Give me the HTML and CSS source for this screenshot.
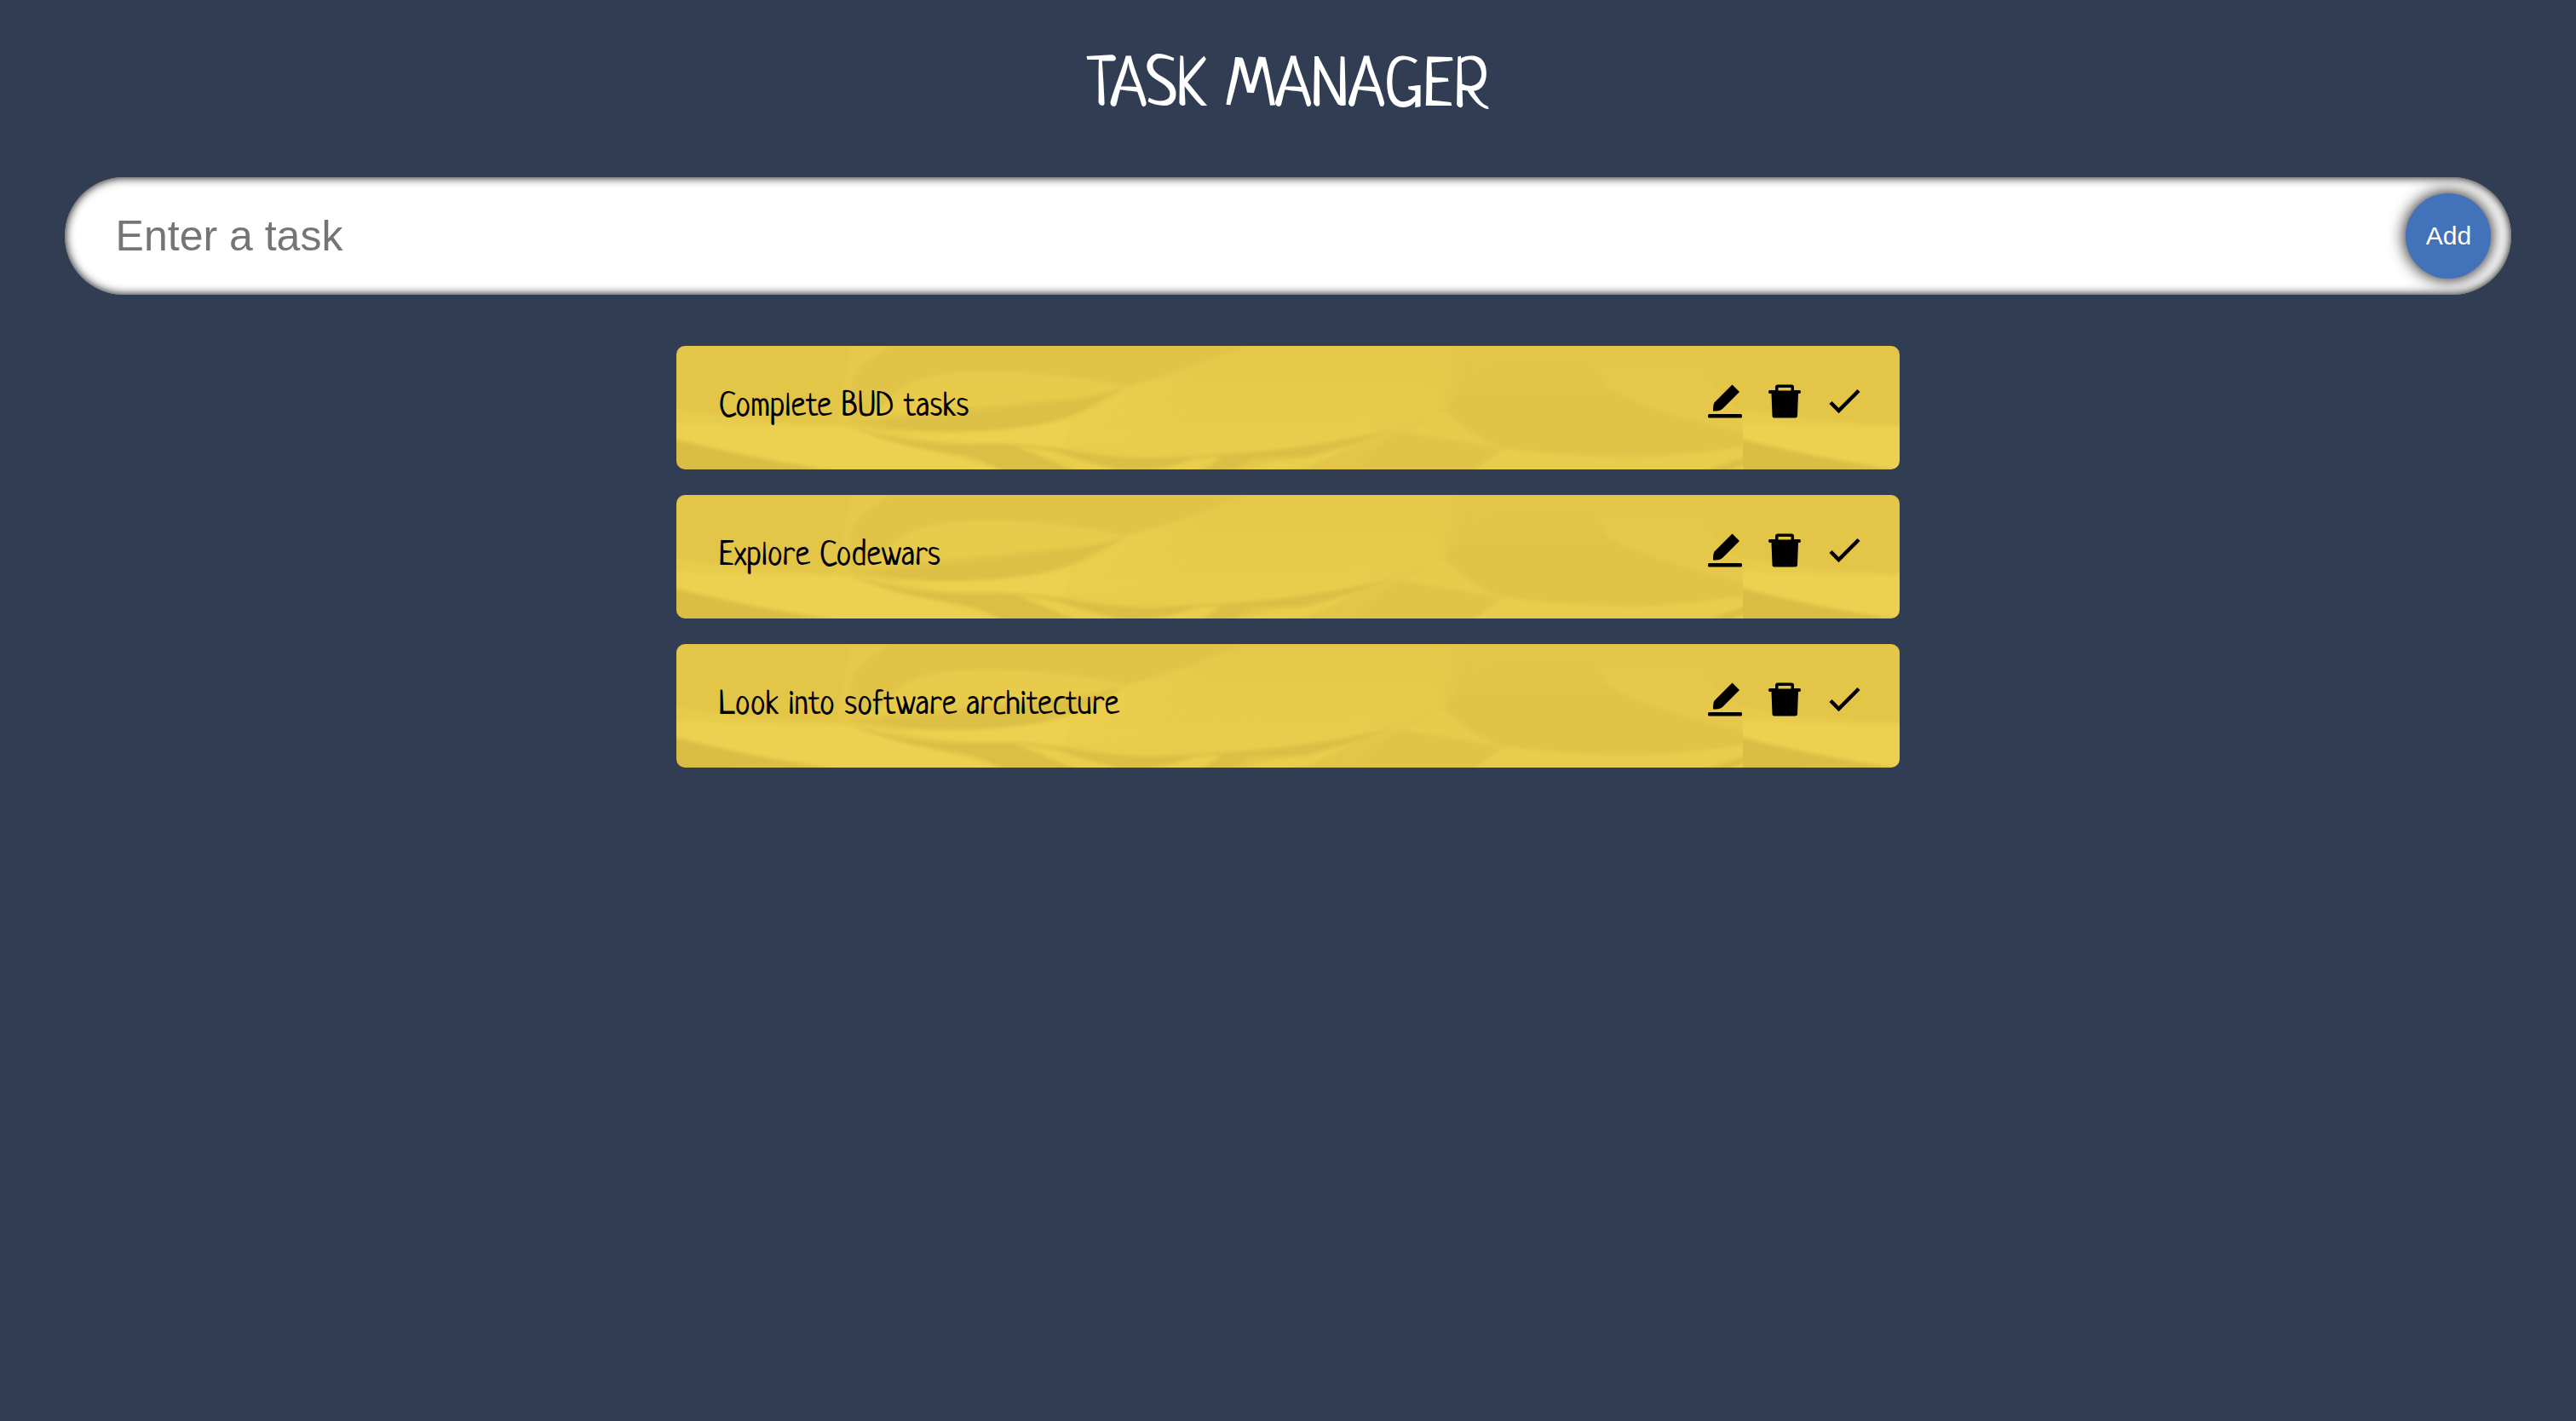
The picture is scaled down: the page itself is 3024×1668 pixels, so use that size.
FILE: index.html
```html
<!DOCTYPE html>
<html lang="en">
<head>
<meta charset="utf-8">
<meta name="viewport" content="width=device-width, initial-scale=1">
<title>Task Manager</title>
<link rel="stylesheet" href="styles.css">
</head>
<body>
<svg class="sprite" aria-hidden="true">
  <symbol id="icon-edit" viewBox="0 0 40 40">
    <path d="M28.500 0.500L37 9L17 29C14 31.500 10 31.500 6 31.500C6 28 6 24 7.500 21.500Z"/>
    <rect y="35" width="40" height="4.500" rx="1.500"/>
  </symbol>
  <symbol id="icon-trash" viewBox="0 0 40 40">
    <path fill-rule="evenodd" d="M12 0.500H28Q31 0.500 31 3.500V7H37.500Q39 7 39 9Q39 11 37.500 11H36L35 37Q35 39.500 32 39.500H8Q5.500 39.500 5.500 37L4.500 11H2.500Q1 11 1 9Q1 7 2.500 7H9V3.500Q9 0.500 12 0.500ZM12.500 4V7.500H27.500V4Z"/>
  </symbol>
  <symbol id="icon-check" viewBox="0 0 40 40">
    <path d="M4 21.500L13.500 31L37 7.500" fill="none" stroke="currentColor" stroke-width="4.500"/>
  </symbol>
</svg>
<main class="app">
  <h1 class="title">TASK MANAGER</h1>
  <form class="task-form">
    <input class="task-input" type="text" placeholder="Enter a task" aria-label="Enter a task">
    <button class="add-button" type="button">Add</button>
  </form>
  <ul class="task-list">
    <li class="task">
      <span class="task-text">Complete BUD tasks</span>
      <div class="actions">
        <button class="action" type="button" aria-label="Edit"><svg class="icon"><use href="#icon-edit"/></svg></button>
        <button class="action" type="button" aria-label="Delete"><svg class="icon"><use href="#icon-trash"/></svg></button>
        <button class="action" type="button" aria-label="Done"><svg class="icon"><use href="#icon-check"/></svg></button>
      </div>
    </li>
    <li class="task">
      <span class="task-text">Explore Codewars</span>
      <div class="actions">
        <button class="action" type="button" aria-label="Edit"><svg class="icon"><use href="#icon-edit"/></svg></button>
        <button class="action" type="button" aria-label="Delete"><svg class="icon"><use href="#icon-trash"/></svg></button>
        <button class="action" type="button" aria-label="Done"><svg class="icon"><use href="#icon-check"/></svg></button>
      </div>
    </li>
    <li class="task">
      <span class="task-text">Look into software architecture</span>
      <div class="actions">
        <button class="action" type="button" aria-label="Edit"><svg class="icon"><use href="#icon-edit"/></svg></button>
        <button class="action" type="button" aria-label="Delete"><svg class="icon"><use href="#icon-trash"/></svg></button>
        <button class="action" type="button" aria-label="Done"><svg class="icon"><use href="#icon-check"/></svg></button>
      </div>
    </li>
  </ul>
</main>
</body>
</html>
```

FILE: styles.css
```css
* {
  box-sizing: border-box;
}

body {
  margin: 0;
  min-height: 100vh;
  background: #313d52;
  font-family: "Neucha", "Liberation Sans Narrow", "Open Sans Condensed", "DejaVu Sans Condensed", sans-serif;
}

.sprite {
  display: none;
}

.app {
  padding: 54px 2.5%;
}

.title {
  margin: 0 0 54px;
  color: #fff;
  font-size: 80px;
  font-weight: 400;
  line-height: 100px;
  text-align: center;
}

.task-form {
  display: flex;
  align-items: center;
  padding: 19px 24px 19px 60px;
  border-radius: 70px;
  overflow: hidden;
  background: #fff;
  box-shadow: inset 0 0 12px #000;
}

.task-input {
  flex: 1;
  min-width: 0;
  padding: 0;
  border: 0;
  outline: 0;
  background: transparent;
  font: 50px "Liberation Sans", Arial, sans-serif;
}

.task-input::placeholder {
  color: #757575;
  opacity: 1;
}

.add-button {
  width: 100px;
  height: 100px;
  padding: 0;
  border: 0;
  border-radius: 50%;
  background: #4272b9;
  box-shadow: 0 0 20px #000;
  color: #fff;
  font: 30px "Liberation Sans", Arial, sans-serif;
}

.task-list {
  display: grid;
  gap: 30px;
  width: 50%;
  margin: 60px auto 0;
  padding: 0;
  list-style: none;
}

/* Folded yellow paper, repeated across the card */
.task {
  display: flex;
  align-items: center;
  justify-content: space-between;
  gap: 30px;
  min-height: 145px;
  padding: 28px 45px 30px 50px;
  border-radius: 10px;
  background: #e4c648 url("data:image/svg+xml,%3Csvg xmlns='http://www.w3.org/2000/svg' width='1252' height='145' viewBox='0 0 1252 145'%3E%3Cdefs%3E%3Cfilter id='s' x='-5%25' y='-10%25' width='110%25' height='120%25'%3E%3CfeGaussianBlur stdDeviation='2'/%3E%3C/filter%3E%3Cfilter id='w' x='-10%25' y='-30%25' width='120%25' height='160%25'%3E%3CfeGaussianBlur stdDeviation='9'/%3E%3C/filter%3E%3ClinearGradient id='g' x2='0' y2='1'%3E%3Cstop stop-color='%23e4c648'/%3E%3Cstop offset='1' stop-color='%23e9cd4c'/%3E%3C/linearGradient%3E%3ClinearGradient id='h' gradientUnits='userSpaceOnUse' x1='530' y1='50' x2='590' y2='90'%3E%3Cstop stop-color='%23e9cd4c'/%3E%3Cstop offset='1' stop-color='%23e9cd4c' stop-opacity='0'/%3E%3C/linearGradient%3E%3ClinearGradient id='d' gradientUnits='userSpaceOnUse' x1='980' y1='15' x2='980' y2='75'%3E%3Cstop stop-color='%23e0c347' stop-opacity='0'/%3E%3Cstop offset='1' stop-color='%23e0c347'/%3E%3C/linearGradient%3E%3ClinearGradient id='r' gradientUnits='userSpaceOnUse' x1='1110' y1='55' x2='1110' y2='5'%3E%3Cstop stop-color='%23e7ca4c'/%3E%3Cstop offset='1' stop-color='%23e7ca4c' stop-opacity='0'/%3E%3C/linearGradient%3E%3C/defs%3E%3Crect width='1252' height='145' fill='%23e3c548'/%3E%3Cpath fill='url(%23g)' d='M640-20H920L900 80L840 100L740 125L500 125L520 60Z' filter='url(%23w)'/%3E%3Cg filter='url(%23s)'%3E%3Cpath fill='%23e7ca4b' d='M205 0H265Q215 22 208 45V90H188Z' opacity='.6'/%3E%3Cpath fill='%23e0c347' d='M265-9Q208 25 205 48V92Q260 103 340 99Q446 92 530 48Q600 28 635 12L690-9Z'/%3E%3Cpath fill='%23e9cd4c' d='M-5 73Q90 91 205 92Q300 106 350 100Q430 95 470 80L500 100Q650 88 830 98Q770 118 670 124L560 134L446 126L410 150H-5Z' opacity='.8'/%3E%3Cpath fill='url(%23h)' d='M440 92Q500 70 530 47Q600 28 640 12L690-5L720 10L580 110L446 120Z'/%3E%3Cpath fill='%23ecd050' d='M-5 90Q120 96 200 95L270 115L400 150H-5ZM250 98Q360 108 460 87Q465 100 450 121L300 110Z'/%3E%3Cpath fill='%23dabd44' d='M-6 108Q80 131 190 147L-6 150Z'/%3E%3Cpath fill='%23e8cb4c' d='M245 68Q265 36 330 31Q420 26 530 47Q500 61 446 63Q350 72 300 78L205 88Q230 80 245 68Z'/%3E%3Cpath fill='%23dcbf45' d='M240 88Q330 84 400 73Q480 65 533 47Q495 63 475 77Q430 98 345 100Q290 102 250 96Z'/%3E%3Cpath fill='%23dbbe44' d='M192 91Q260 114 340 116Q400 113 446 120Q510 132 560 132L650 127Q740 121 840 99Q820 108 740 130L675 133L640 150H615L640 133Q590 142 545 145L480 150L390 150Q350 129 325 127Q260 118 192 91Z'/%3E%3Cpath fill='%23e9cd4c' d='M398 118Q440 120 465 131L535 150H475Q430 130 398 118ZM550 150L610 132L640 130L608 150ZM665 145L700 135L740 132L800 115L740 143L690 150Z'/%3E%3Cpath fill='%23e0c347' d='M798 150L820 122L850 100Q900 115 945 112L968 121L932 150Z'/%3E%3Cpath fill='%23e8cb4c' d='M845 100Q880 94 890 78L910 80Q925 104 972 123Q920 110 845 100Z'/%3E%3Cpath fill='%23e8cc4c' d='M972 120Q1110 137 1180 127L1258 116V150H930Z'/%3E%3Cpath fill='url(%23d)' d='M903 77L922 45L990 10L1065 10Q1070 38 1120 64Q1180 90 1258 104V117Q1180 131 1100 127Q1020 125 975 120Q930 98 903 77Z'/%3E%3Cpath fill='url(%23r)' d='M1060-9H1195Q1200 48 1258 80V103Q1150 78 1095 50Z' opacity='.8'/%3E%3Cpath fill='%23dbbe44' d='M1205 148L1258 130V137L1230 150Z'/%3E%3C/g%3E%3C/svg%3E") repeat-x 0 0;
}

.task-text {
  color: #000;
  font-size: 40px;
  line-height: 50px;
}

.actions {
  display: flex;
  gap: 30px;
  padding-bottom: 14px;
}

.action {
  padding: 0;
  border: 0;
  background: none;
  color: #000;
}

.icon {
  display: block;
  width: 40px;
  height: 40px;
  fill: currentColor;
}
```
